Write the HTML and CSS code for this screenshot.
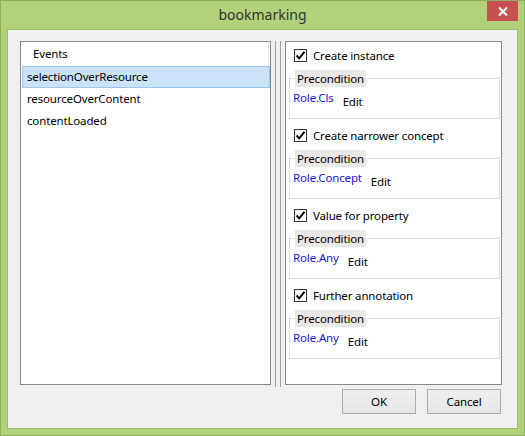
FILE: index.html
```html
<!DOCTYPE html>
<html>
<head>
<meta charset="utf-8">
<link rel="stylesheet" href="styles.css">
</head>
<body>
<div class="window">
  <div class="titlebar">
    <span class="title">bookmarking</span>
    <div class="close">
      <svg width="10" height="9" viewBox="0 0 10 9"><path d="M1 0.5 L9 8.5 M9 0.5 L1 8.5" stroke="#fff" stroke-width="2"/></svg>
    </div>
  </div>
  <div class="client">
    <div class="main">
      <div class="list">
        <div class="list-header"><span>Events</span></div>
        <div class="row selected">selectionOverResource</div>
        <div class="row">resourceOverContent</div>
        <div class="row">contentLoaded</div>
      </div>
      <div class="splitter"></div>
      <div class="panel">
        <div class="section">
          <label class="check"><span class="box"><svg width="11" height="11" viewBox="0 0 11 11"><path d="M1.5 5.5 L4.2 8.3 L9.5 1.8" fill="none" stroke="#000" stroke-width="2"/></svg></span>Create instance</label>
          <fieldset class="group">
            <legend>Precondition</legend>
            <div class="group-body"><span class="role">Role.Cls</span><span class="edit">Edit</span></div>
          </fieldset>
        </div>
        <div class="section">
          <label class="check"><span class="box"><svg width="11" height="11" viewBox="0 0 11 11"><path d="M1.5 5.5 L4.2 8.3 L9.5 1.8" fill="none" stroke="#000" stroke-width="2"/></svg></span>Create narrower concept</label>
          <fieldset class="group">
            <legend>Precondition</legend>
            <div class="group-body"><span class="role">Role.Concept</span><span class="edit">Edit</span></div>
          </fieldset>
        </div>
        <div class="section">
          <label class="check"><span class="box"><svg width="11" height="11" viewBox="0 0 11 11"><path d="M1.5 5.5 L4.2 8.3 L9.5 1.8" fill="none" stroke="#000" stroke-width="2"/></svg></span>Value for property</label>
          <fieldset class="group">
            <legend>Precondition</legend>
            <div class="group-body"><span class="role">Role.Any</span><span class="edit">Edit</span></div>
          </fieldset>
        </div>
        <div class="section">
          <label class="check"><span class="box"><svg width="11" height="11" viewBox="0 0 11 11"><path d="M1.5 5.5 L4.2 8.3 L9.5 1.8" fill="none" stroke="#000" stroke-width="2"/></svg></span>Further annotation</label>
          <fieldset class="group">
            <legend>Precondition</legend>
            <div class="group-body"><span class="role">Role.Any</span><span class="edit">Edit</span></div>
          </fieldset>
        </div>
      </div>
    </div>
    <div class="buttons">
      <div class="btn">OK</div>
      <div class="btn">Cancel</div>
    </div>
  </div>
</div>
</body>
</html>
```
FILE: styles.css
```css
html, body {
  margin: 0;
  padding: 0;
}
body {
  width: 525px;
  height: 436px;
  overflow: hidden;
  font-family: "Noto Sans", "Open Sans", sans-serif;
  font-size: 11.5px;
  letter-spacing: -0.15px;
  color: #000;
}
.window {
  box-sizing: border-box;
  width: 525px;
  height: 436px;
  border: 1px solid #8fae5f;
  background: #b1d27a;
  display: flex;
  flex-direction: column;
}
.titlebar {
  height: 28px;
  display: grid;
  grid-template-columns: 1fr auto 1fr;
  align-items: start;
}
.title {
  grid-column: 2;
  font-size: 14px;
  letter-spacing: 0;
  line-height: 28px;
  color: #333;
  margin-top: 0;
}
.close {
  grid-column: 3;
  justify-self: end;
  width: 31px;
  height: 20px;
  margin-right: 6px;
  background: #c75050;
  display: flex;
  align-items: center;
  justify-content: center;
}
.close svg { display: block; }
.client {
  flex: 1;
  margin: 0 6px 6px 6px;
  border: 1px solid #9dbd6a;
  background: #f0f0f0;
  display: flex;
  flex-direction: column;
}
.main {
  display: flex;
  align-items: flex-start;
  padding: 11px 0 0 12px;
}
.list {
  box-sizing: border-box;
  width: 251px;
  height: 344px;
  border: 1px solid #828790;
  background: #fff;
}
.list-header {
  box-sizing: border-box;
  width: 248px;
  height: 24px;
  border-right: 1px solid #e5e5e5;
  padding-left: 12px;
  line-height: 24px;
}
.row {
  box-sizing: border-box;
  height: 22px;
  margin-left: 1px;
  padding-left: 5px;
  line-height: 21px;
  white-space: nowrap;
}
.row.selected {
  background: #cbe3f8;
  border: 1px solid #9cc5ee;
  padding-left: 4px;
  line-height: 20px;
}
.splitter {
  width: 4px;
  height: 346px;
  margin: 0 4px;
  border-left: 1px solid #a0a0a0;
  border-right: 1px solid #a0a0a0;
}
.panel {
  box-sizing: border-box;
  width: 217px;
  height: 344px;
  border: 1px solid #828790;
  background: #fff;
  padding-top: 3px;
}
.section + .section {
  margin-top: 6px;
}
.check {
  display: flex;
  align-items: center;
  height: 20px;
  margin-left: 8px;
  white-space: nowrap;
}
.box {
  box-sizing: border-box;
  width: 13px;
  height: 13px;
  border: 1px solid #333;
  background: #fff;
  margin-right: 6px;
  display: flex;
  align-items: center;
  justify-content: center;
}
.box svg { display: block; }
.group {
  margin: 5px 1px 0 3px;
  padding: 0;
  border: 1px solid #dcdcdc;
  min-width: 0;
}
.group legend {
  margin-left: 5px;
  padding: 0 2px;
  background: #e8e8e8;
  line-height: 17px;
  height: 17px;
}
.group-body {
  height: 31px;
  display: flex;
  align-items: flex-start;
  padding-left: 3px;
}
.role {
  color: #1515e0;
  line-height: 14px;
  margin-top: 4px;
}
.edit {
  line-height: 14px;
  margin-top: 8px;
  margin-left: 9px;
}
.buttons {
  display: flex;
  justify-content: flex-end;
  gap: 11px;
  padding-right: 16px;
  margin-top: 2px;
}
.btn {
  box-sizing: border-box;
  width: 74px;
  height: 25px;
  border: 1px solid #acacac;
  background: linear-gradient(#f0f0f0, #e5e5e5);
  display: flex;
  align-items: center;
  justify-content: center;
}
```
